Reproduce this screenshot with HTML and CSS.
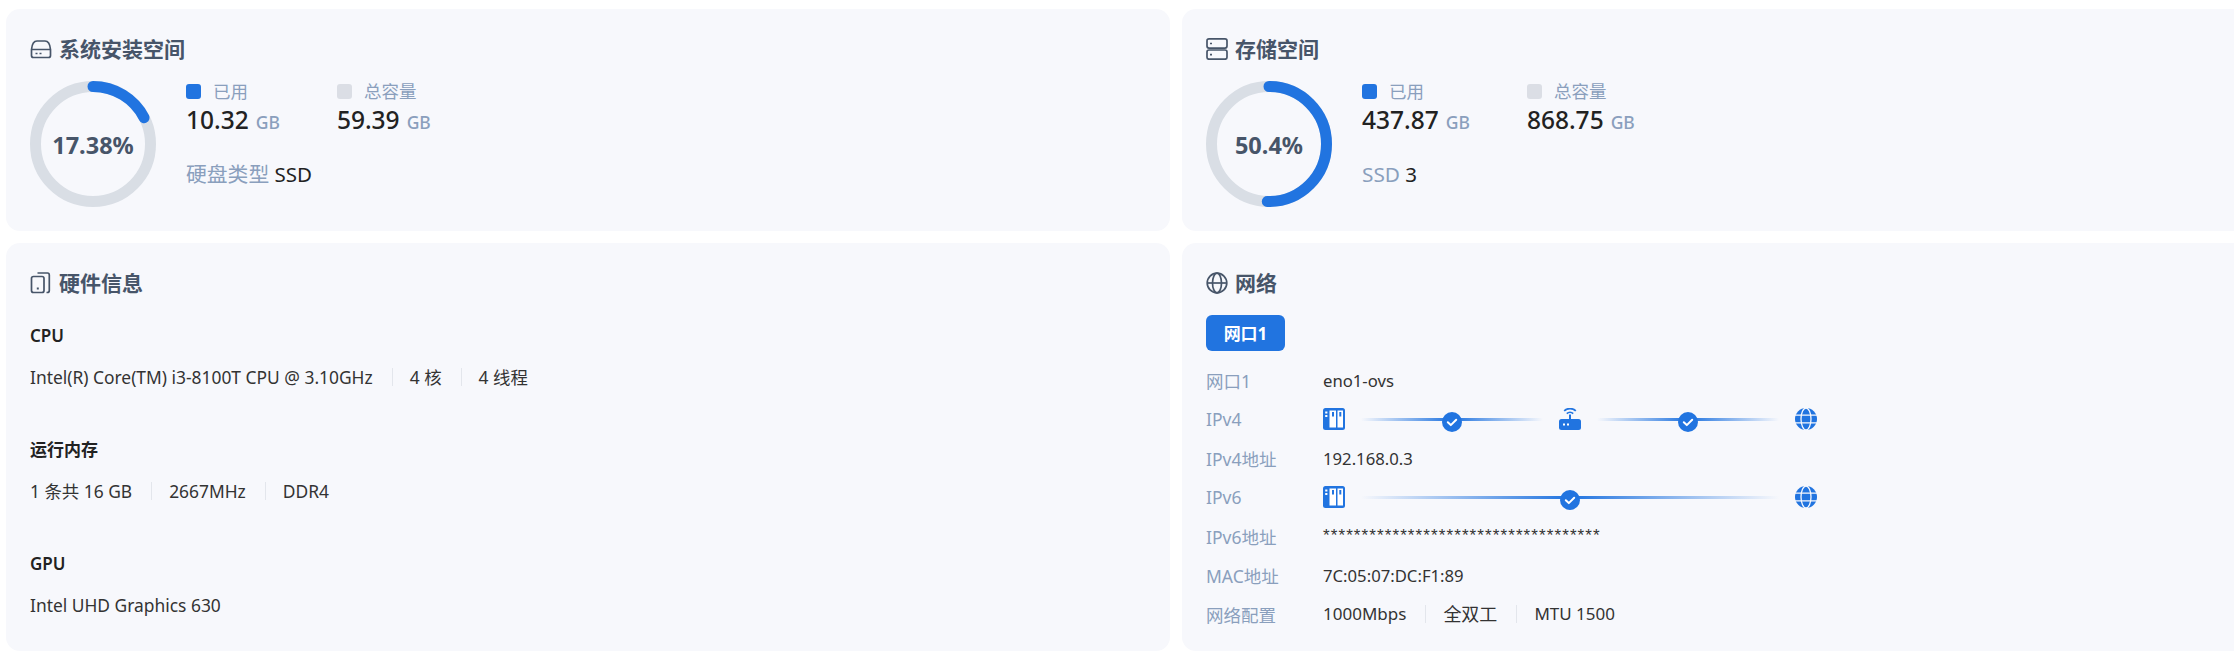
FILE: index.html
```html
<!DOCTYPE html>
<html lang="zh-CN">
<head>
<meta charset="utf-8">
<title>系统概览</title>
<link rel="stylesheet" href="styles.css">
</head>
<body>
<svg class="defs" width="0" height="0" aria-hidden="true">
  <symbol id="i-server" viewBox="0 0 22 22">
    <rect width="22" height="22" rx="2.5" fill="#2174e0"/>
    <rect x="6.5" y="2.5" width="6.5" height="17" fill="#fff"/>
    <rect x="14.5" y="2.5" width="5.5" height="17" fill="#fff"/>
    <rect x="9" y="4" width="2" height="4.5" fill="#2174e0"/>
    <rect x="16.3" y="4" width="2" height="4.5" fill="#2174e0"/>
    <rect x="2.2" y="3.5" width="2.2" height="2" fill="#fff"/>
    <rect x="2.2" y="7" width="2.2" height="2" fill="#fff"/>
  </symbol>
  <symbol id="i-globe" viewBox="0 0 22 22">
    <circle cx="11" cy="11" r="11" fill="#2174e0"/>
    <ellipse cx="11" cy="11" rx="5" ry="11" fill="none" stroke="#f7f8fc" stroke-width="1.3"/>
    <path d="M0 7.2H22M0 14.8H22" stroke="#f7f8fc" stroke-width="1.3"/>
  </symbol>
  <symbol id="i-router" viewBox="0 0 22 22">
    <rect y="11" width="22" height="11" rx="2.5" fill="#2174e0"/>
    <rect x="10" y="6.5" width="2" height="5" fill="#2174e0"/>
    <path d="M7.8 5.6a4.6 4.6 0 0 1 6.4 0M5.2 2.9a8.4 8.4 0 0 1 11.6 0" fill="none" stroke="#2174e0" stroke-width="1.7"/>
    <rect x="4" y="15.5" width="2" height="2" fill="#fff"/>
    <rect x="8" y="15.5" width="2" height="2" fill="#fff"/>
  </symbol>
  <symbol id="i-check" viewBox="0 0 20 20">
    <circle cx="10" cy="10" r="10" fill="#2174e0"/>
    <path d="M5.8 10.3l3 2.8 5.4-5.4" fill="none" stroke="#fff" stroke-width="2" stroke-linecap="round" stroke-linejoin="round"/>
  </symbol>
</svg>
<main class="board">
  <section class="card">
    <h2 class="card-title">
      <svg class="title-icon" width="22" height="22" viewBox="0 0 22 22"><path d="M1.5 11.5C2 6 4 3 7 3H15C18 3 20 6 20.5 11.5V17.5A2 2 0 0 1 18.5 19.5H3.500A2 2 0 0 1 1.500 17.500ZM1.500 11.500H20.500" fill="none" stroke="#475569" stroke-width="1.700"/><path d="M5.500 15.500H7.500M9.500 15.500H11.500" stroke="#475569" stroke-width="1.700"/></svg>
      <span>系统安装空间</span>
    </h2>
    <div class="usage">
      <div class="donut">
        <svg width="126" height="126" viewBox="0 0 126 126"><circle class="track" cx="63" cy="63" r="57.500"/><circle class="arc" cx="63" cy="63" r="57.500" stroke-dasharray="62.800 361.300" transform="rotate(-90 63 63)"/></svg>
        <span class="donut-text">17.38%</span>
      </div>
      <div class="usage-info">
        <div class="stats">
          <div class="stat">
            <div class="legend"><i class="swatch used"></i>已用</div>
            <div class="amount">10.32<small>GB</small></div>
          </div>
          <div class="stat">
            <div class="legend"><i class="swatch total"></i>总容量</div>
            <div class="amount">59.39<small>GB</small></div>
          </div>
        </div>
        <div class="extra"><span class="muted">硬盘类型</span> SSD</div>
      </div>
    </div>
  </section>

  <section class="card">
    <h2 class="card-title">
      <svg class="title-icon" width="22" height="22" viewBox="0 0 22 22"><rect x="1" y="0.900" width="20" height="9.200" rx="2" fill="none" stroke="#475569" stroke-width="1.700"/><rect x="1" y="12" width="20" height="9.200" rx="2" fill="none" stroke="#475569" stroke-width="1.700"/><path d="M4 5.500H6M4 16.600H6" stroke="#475569" stroke-width="1.700"/></svg>
      <span>存储空间</span>
    </h2>
    <div class="usage">
      <div class="donut">
        <svg width="126" height="126" viewBox="0 0 126 126"><circle class="track" cx="63" cy="63" r="57.500"/><circle class="arc" cx="63" cy="63" r="57.500" stroke-dasharray="182.100 361.300" transform="rotate(-90 63 63)"/></svg>
        <span class="donut-text">50.4%</span>
      </div>
      <div class="usage-info">
        <div class="stats">
          <div class="stat">
            <div class="legend"><i class="swatch used"></i>已用</div>
            <div class="amount">437.87<small>GB</small></div>
          </div>
          <div class="stat">
            <div class="legend"><i class="swatch total"></i>总容量</div>
            <div class="amount">868.75<small>GB</small></div>
          </div>
        </div>
        <div class="extra"><span class="muted">SSD</span> 3</div>
      </div>
    </div>
  </section>

  <section class="card">
    <h2 class="card-title">
      <svg class="title-icon" width="22" height="22" viewBox="0 0 22 22"><rect x="1.500" y="4.500" width="12.500" height="16" rx="2" fill="none" stroke="#475569" stroke-width="1.700"/><path d="M7.500 1H17.500A2 2 0 0 1 19.300 3V18.500A2 2 0 0 1 17.300 20.500H16.500" fill="none" stroke="#475569" stroke-width="1.700"/><rect x="6.800" y="15.500" width="2" height="2" fill="#475569"/></svg>
      <span>硬件信息</span>
    </h2>
    <div class="hw">
      <div class="hw-group">
        <h3 class="hw-name">CPU</h3>
        <div class="hw-values"><span>Intel(R) Core(TM) i3-8100T CPU @ 3.10GHz</span><span>4 核</span><span>4 线程</span></div>
      </div>
      <div class="hw-group">
        <h3 class="hw-name">运行内存</h3>
        <div class="hw-values"><span>1 条共 16 GB</span><span>2667MHz</span><span>DDR4</span></div>
      </div>
      <div class="hw-group">
        <h3 class="hw-name">GPU</h3>
        <div class="hw-values"><span>Intel UHD Graphics 630</span></div>
      </div>
    </div>
  </section>

  <section class="card">
    <h2 class="card-title">
      <svg class="title-icon" width="22" height="22" viewBox="0 0 22 22"><circle cx="11" cy="11" r="9.800" fill="none" stroke="#475569" stroke-width="1.700"/><ellipse cx="11" cy="11" rx="4.500" ry="9.800" fill="none" stroke="#475569" stroke-width="1.700"/><path d="M1.500 11H20.500" stroke="#475569" stroke-width="1.700"/></svg>
      <span>网络</span>
    </h2>
    <button class="tab" type="button">网口1</button>
    <dl class="net">
      <div class="net-row"><dt>网口1</dt><dd>eno1-ovs</dd></div>
      <div class="net-row"><dt>IPv4</dt><dd class="topo">
        <svg class="node"><use href="#i-server"/></svg>
        <span class="link short"><svg class="ok"><use href="#i-check"/></svg></span>
        <svg class="node"><use href="#i-router"/></svg>
        <span class="link short"><svg class="ok"><use href="#i-check"/></svg></span>
        <svg class="node"><use href="#i-globe"/></svg>
      </dd></div>
      <div class="net-row"><dt>IPv4地址</dt><dd>192.168.0.3</dd></div>
      <div class="net-row"><dt>IPv6</dt><dd class="topo">
        <svg class="node"><use href="#i-server"/></svg>
        <span class="link long"><svg class="ok"><use href="#i-check"/></svg></span>
        <svg class="node"><use href="#i-globe"/></svg>
      </dd></div>
      <div class="net-row"><dt>IPv6地址</dt><dd class="mask">************************************</dd></div>
      <div class="net-row"><dt>MAC地址</dt><dd>7C:05:07:DC:F1:89</dd></div>
      <div class="net-row"><dt>网络配置</dt><dd class="hw-values"><span>1000Mbps</span><span class="cjk-wide">全双工</span><span>MTU 1500</span></dd></div>
    </dl>
  </section>
</main>
</body>
</html>
```
FILE: styles.css
```css
* { box-sizing: border-box; }
html, body { margin: 0; height: 100%; overflow: hidden; background: #fff; }
body { font-family: "Noto Sans", "Noto Sans CJK SC", sans-serif; color: #222; }
.defs { display: block; height: 0; }

.board {
  display: grid;
  grid-template-columns: 1164px 1164px;
  grid-template-rows: 222px 408px;
  gap: 12px;
  padding: 9px 0 0 6px;
  width: 2400px;
}
.card {
  background: #f7f8fc;
  border-radius: 14px;
  padding: 26px 24px 0;
  min-width: 0;
}
.card-title {
  display: flex;
  align-items: center;
  gap: 7px;
  margin: 0;
  height: 28px;
  font-size: 21px;
  line-height: 28px;
  font-weight: 700;
  color: #475569;
}
.title-icon { flex: none; }

.usage { display: flex; margin-top: 18px; }
.donut { position: relative; width: 126px; height: 126px; flex: none; }
.donut svg { display: block; }
.track { fill: none; stroke: #d9dee5; stroke-width: 11; }
.arc { fill: none; stroke: #2174e0; stroke-width: 11; stroke-linecap: round; }
.donut-text {
  position: absolute;
  inset: 0;
  display: flex;
  align-items: center;
  justify-content: center;
  padding-top: 2px;
  font-size: 23.500px;
  font-weight: 700;
  color: #475569;
}
.usage-info { margin-left: 30px; }
.stats { display: flex; gap: 57px; }
.legend {
  display: flex;
  align-items: center;
  height: 20px;
  font-size: 17.500px;
  line-height: 20px;
  color: #8a9fbd;
}
.swatch { width: 15px; height: 15px; border-radius: 3px; margin-right: 12px; }
.swatch.used { background: #2174e0; }
.swatch.total { background: #dbdee5; }
.amount { font-size: 24.500px; line-height: 38px; font-weight: 500; color: #222; white-space: nowrap; }
.amount small { font-size: 17.500px; font-weight: 500; color: #8a9fbd; margin-left: 7px; }
.extra { margin-top: 18px; font-size: 20.500px; line-height: 30px; color: #222; }
.muted { color: #8a9fbd; font-size: 20.800px; }

.hw { margin-top: 27px; }
.hw-group { height: 114px; }
.hw-name { margin: 0; font-size: 17px; line-height: 24px; font-weight: 600; color: #222; }
.hw-values { display: flex; align-items: center; font-size: 17.400px; color: #333; margin-top: 17px; line-height: 24px; }
.hw-values span { padding: 0 19px 0 18px; position: relative; }
.hw-values span:first-child { padding-left: 0; }
.hw-values span + span::before {
  content: "";
  position: absolute;
  left: 0;
  top: 3px;
  width: 1px;
  height: 18px;
  background: #e3e6ec;
}

.tab {
  display: block;
  margin: 17.500px 0 0;
  width: 79px;
  height: 36px;
  border: 0;
  border-radius: 6px;
  background: #2174e0;
  color: #fff;
  font: 700 17px "Noto Sans", "Noto Sans CJK SC", sans-serif;
}
.net { margin: 10px 0 0; }
.net-row { display: flex; align-items: center; height: 39px; }
.net-row dt { width: 117px; flex: none; font-size: 17.500px; color: #8a9fbd; }
.net-row dd { margin: 0; font-size: 16.700px; color: #333; }
.net-row dd.hw-values { margin-top: 0; font-size: 17px; }
.net-row .cjk-wide { font-size: 18px; }
.net-row dd.mask { font-family: "Liberation Sans", sans-serif; font-size: 17px; letter-spacing: 1.100px; }
.topo { display: flex; align-items: center; gap: 16px; }
.node { width: 22px; height: 22px; flex: none; margin-top: -1px; }
.link {
  position: relative;
  display: block;
  height: 3px;
  background: linear-gradient(90deg, rgba(33,116,224,0), #2174e0 50%, rgba(33,116,224,0));
}
.link.short { width: 182px; }
.link.long { width: 418px; }
.ok {
  position: absolute;
  left: 50%;
  top: -6px;
  width: 20px;
  height: 20px;
  margin-left: -10px;
}
```
